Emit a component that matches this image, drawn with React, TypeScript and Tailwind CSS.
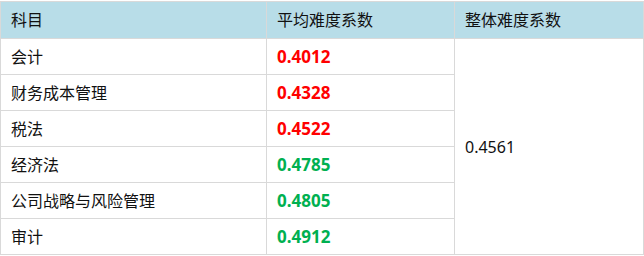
const rows = [
  { name: "会计", value: "0.4012", hard: true },
  { name: "财务成本管理", value: "0.4328", hard: true },
  { name: "税法", value: "0.4522", hard: true },
  { name: "经济法", value: "0.4785", hard: false },
  { name: "公司战略与风险管理", value: "0.4805", hard: false },
  { name: "审计", value: "0.4912", hard: false },
];

const font = { fontFamily: '"Noto Sans", "Noto Sans CJK SC", sans-serif' };

export default function App() {
  return (
    <div className="bg-white w-[644px] h-[256px] pt-px" style={font}>
      <table className="w-[643px] table-fixed border-collapse text-[16px] text-[#111]">
        <colgroup>
          <col className="w-[266px]" />
          <col className="w-[188px]" />
          <col className="w-[189px]" />
        </colgroup>
        <thead>
          <tr className="h-[37px] bg-[#b8dde8]">
            <th className="border border-[#d9d9d9] pl-[10px] text-left font-normal">科目</th>
            <th className="border border-[#d9d9d9] pl-[10px] text-left font-normal">平均难度系数</th>
            <th className="border border-[#d9d9d9] pl-[10px] text-left font-normal">整体难度系数</th>
          </tr>
        </thead>
        <tbody>
          {rows.map((r, i) => (
            <tr key={r.name} className="h-[36px]">
              <td className="border border-[#d9d9d9] pl-[10px]">{r.name}</td>
              <td
                className={`border border-[#d9d9d9] pl-[10px] text-[17px] font-bold ${
                  r.hard ? "text-[#ff0000]" : "text-[#00b050]"
                }`}
              >
                {r.value}
              </td>
              {i === 0 && (
                <td rowSpan={6} className="border border-[#d9d9d9] pl-[10px] align-middle">
                  0.4561
                </td>
              )}
            </tr>
          ))}
        </tbody>
      </table>
    </div>
  );
}
